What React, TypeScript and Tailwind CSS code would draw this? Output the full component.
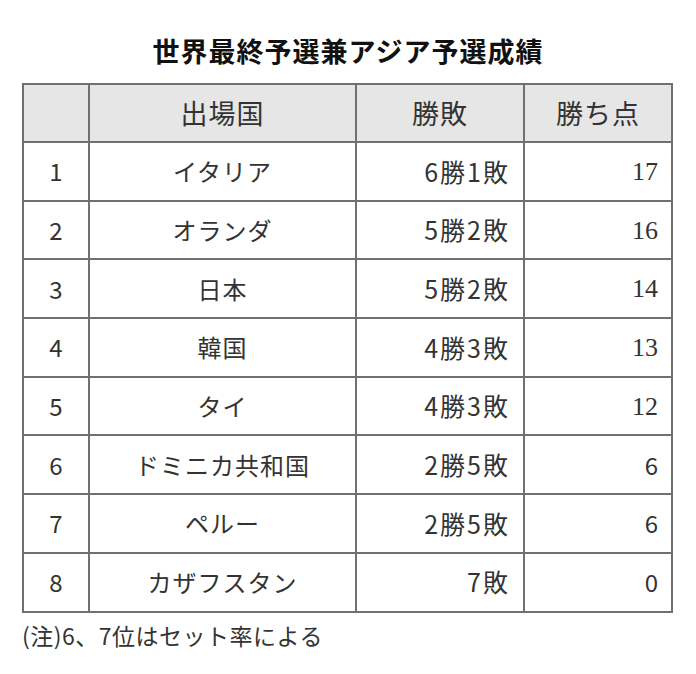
import React from "react";

const rows: { rank: string; name: string; wl: string; pts: string; serif: boolean }[] = [
  { rank: "1", name: "イタリア", wl: "6勝1敗", pts: "17", serif: true },
  { rank: "2", name: "オランダ", wl: "5勝2敗", pts: "16", serif: true },
  { rank: "3", name: "日本", wl: "5勝2敗", pts: "14", serif: true },
  { rank: "4", name: "韓国", wl: "4勝3敗", pts: "13", serif: true },
  { rank: "5", name: "タイ", wl: "4勝3敗", pts: "12", serif: true },
  { rank: "6", name: "ドミニカ共和国", wl: "2勝5敗", pts: "6", serif: false },
  { rank: "7", name: "ペルー", wl: "2勝5敗", pts: "6", serif: false },
  { rank: "8", name: "カザフスタン", wl: "7敗", pts: "0", serif: false },
];

export default function App() {
  return (
    <div className="w-[696px] h-[674px] bg-white text-[#333] font-['Noto_Sans_CJK_JP','Noto_Sans',sans-serif]">
      <div className="pt-[31px] h-[83px] text-center text-[27px] leading-[40px] font-bold text-[#111] tracking-[1px]">
        世界最終予選兼アジア予選成績
      </div>
      <div className="pl-[22px]">
        <table className="border-collapse w-[649px] table-fixed">
          <colgroup>
            <col className="w-[66px]" />
            <col className="w-[267px]" />
            <col className="w-[168px]" />
            <col className="w-[148px]" />
          </colgroup>
          <thead>
            <tr className="h-[58px] bg-[#e6e6e6]">
              <th className="border-2 border-[#707070] font-normal"></th>
              <th className="border-2 border-[#707070] font-normal text-[27px] text-center tracking-[1px]">出場国</th>
              <th className="border-2 border-[#707070] font-normal text-[27px] text-center tracking-[1px]">勝敗</th>
              <th className="border-2 border-[#707070] font-normal text-[27px] text-center tracking-[1px]">勝ち点</th>
            </tr>
          </thead>
          <tbody>
            {rows.map((r) => (
              <tr key={r.rank} className="h-[58.7px]">
                <td className="border-2 border-[#707070] text-center text-[24px]">{r.rank}</td>
                <td className="border-2 border-[#707070] text-center text-[24px] tracking-[1px]">{r.name}</td>
                <td className="border-2 border-[#707070] text-right pr-[13px] text-[25px] tracking-[2px]">{r.wl}</td>
                <td
                  className={
                    r.serif
                      ? "border-2 border-[#707070] text-right pr-[13px] text-[26px] font-['Liberation_Serif',serif]"
                      : "border-2 border-[#707070] text-right pr-[13px] text-[24px]"
                  }
                >
                  {r.pts}
                </td>
              </tr>
            ))}
          </tbody>
        </table>
        <div className="mt-[6px] text-[23px] leading-[32px] tracking-[0.5px]">(注)6、7位はセット率による</div>
      </div>
    </div>
  );
}
